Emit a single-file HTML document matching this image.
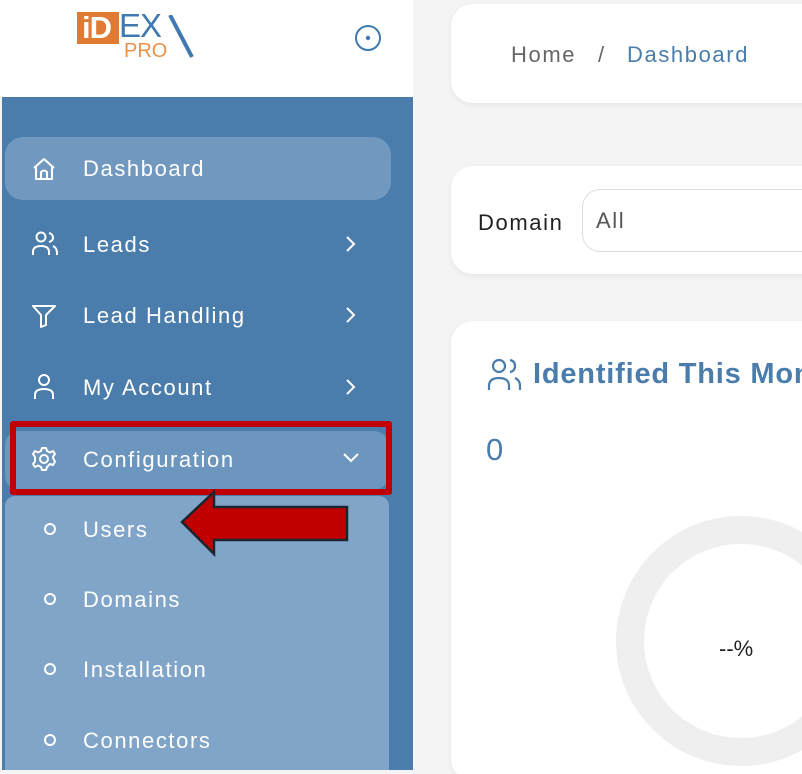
<!DOCTYPE html>
<html style="overflow:hidden"><head><meta charset="utf-8"><style>
*{margin:0;padding:0;box-sizing:border-box}
html,body{width:802px;height:774px;overflow:hidden}
body{background:#f4f4f4;font-family:"Liberation Sans",sans-serif;position:relative}
.abs{position:absolute}
.side{left:2px;top:97px;width:411px;height:673px;background:#4a7dab}
.top{left:0;top:0;width:413px;height:97px;background:#fff}
.item{position:absolute;left:0;width:411px;color:#fff;font-size:22px;letter-spacing:1.6px}
.item .t{position:absolute;left:83px;top:2px}
.item svg{position:absolute}
.card{background:#fff;border-radius:22px;box-shadow:0 2px 6px rgba(0,0,0,0.06)}
.w{letter-spacing:1.6px;font-size:22px}
</style></head><body>
<div class="abs top"></div>
<!-- logo -->
<div class="abs" style="left:77px;top:12px;width:42px;height:32px;background:#e07b35"></div>
<div class="abs" style="left:82px;top:10px;font-size:31px;font-weight:bold;color:#fff;letter-spacing:-1px">iD</div>
<div class="abs" style="left:119px;top:7px;font-size:33px;color:#3f79b0;letter-spacing:-1px">EX</div>
<div class="abs" style="left:124px;top:40px;font-size:20px;color:#e8924a">PRO</div>
<svg class="abs" style="left:150px;top:15px" width="45" height="45"><path d="M20 0 L42 42" stroke="#3f79b0" stroke-width="4"/></svg>
<svg class="abs" style="left:353px;top:24px" width="30" height="30"><circle cx="15" cy="14" r="12" fill="none" stroke="#3f79b0" stroke-width="2"/><circle cx="15" cy="14" r="2.2" fill="#3f79b0"/></svg>

<div class="abs side"></div>
<div class="abs" style="left:5px;top:137px;width:386px;height:63px;border-radius:18px;background:#7199c0"></div>
<div class="abs" style="left:5px;top:431px;width:383px;height:59px;border-radius:14px;background:#6d96be"></div>
<div class="abs" style="left:5px;top:496px;width:384px;height:274px;border-radius:10px 10px 0 0;background:#81a5c8"></div>

<div class="item" style="top:154px"><svg style="left:31px;top:2px" width="26" height="26" fill="none" stroke="#fff" stroke-width="2" stroke-linejoin="round"><path d="M3 12 L13 3 L23 12 M5 10 V23 H21 V10 M10 23 V16 Q13 13 16 16 V23"/></svg><span class="t">Dashboard</span></div>
<div class="item" style="top:230px"><svg style="left:31px;top:1px" width="28" height="26" fill="none" stroke="#fff" stroke-width="2"><circle cx="10" cy="6" r="4.5"/><path d="M2 24 V21 Q2 15 10 15 Q18 15 18 21 V24 M18 2 Q22 3 22 7 Q22 10 18 11 M22 15 Q26 17 26 22 V24"/></svg><span class="t">Leads</span><svg style="left:343px;top:5px" width="14" height="18" fill="none" stroke="#fff" stroke-width="2"><path d="M4 2 L11 9 L4 16"/></svg></div>
<div class="item" style="top:301px"><svg style="left:31px;top:1px" width="26" height="26" fill="none" stroke="#fff" stroke-width="2" stroke-linejoin="round"><path d="M2 4 H24 L15 13 V23 L10 25 V13 Z"/></svg><span class="t">Lead Handling</span><svg style="left:343px;top:5px" width="14" height="18" fill="none" stroke="#fff" stroke-width="2"><path d="M4 2 L11 9 L4 16"/></svg></div>
<div class="item" style="top:373px"><svg style="left:31px;top:0px" width="26" height="28" fill="none" stroke="#fff" stroke-width="2"><circle cx="13" cy="7" r="5"/><path d="M4 26 V22 Q4 16 13 16 Q22 16 22 22 V26"/></svg><span class="t">My Account</span><svg style="left:343px;top:5px" width="14" height="18" fill="none" stroke="#fff" stroke-width="2"><path d="M4 2 L11 9 L4 16"/></svg></div>
<div class="item" style="top:445px"><svg style="left:31px;top:1px" width="26" height="26" fill="none" stroke="#fff" stroke-width="2"><circle cx="13" cy="13" r="4"/><path d="M11 2 H15 L16 5 L19 6.5 L22 5 L24 8 L22 10.5 L22.5 13 L24 15.5 L22 19 L19 18 L16 21 L15 24 H11 L10 21 L7 19.5 L4 21 L2 18 L4 15.5 V11 L2 8 L4 5 L7 6.5 L10 5 Z" stroke-linejoin="round"/></svg><span class="t">Configuration</span><svg style="left:341px;top:6px" width="20" height="14" fill="none" stroke="#fff" stroke-width="2"><path d="M3 3 L10 10 L17 3"/></svg></div>
<div class="item" style="top:515px"><svg style="left:43px;top:7px" width="14" height="14"><circle cx="7" cy="7" r="5" fill="none" stroke="#fff" stroke-width="2"/></svg><span class="t">Users</span></div>
<div class="item" style="top:585px"><svg style="left:43px;top:7px" width="14" height="14"><circle cx="7" cy="7" r="5" fill="none" stroke="#fff" stroke-width="2"/></svg><span class="t">Domains</span></div>
<div class="item" style="top:655px"><svg style="left:43px;top:7px" width="14" height="14"><circle cx="7" cy="7" r="5" fill="none" stroke="#fff" stroke-width="2"/></svg><span class="t">Installation</span></div>
<div class="item" style="top:726px"><svg style="left:43px;top:7px" width="14" height="14"><circle cx="7" cy="7" r="5" fill="none" stroke="#fff" stroke-width="2"/></svg><span class="t">Connectors</span></div>

<div class="abs" style="left:10px;top:421px;width:382px;height:74px;border:6px solid #c00000;border-radius:3px"></div>
<svg class="abs" style="left:178px;top:488px" width="175" height="72"><path d="M4 34 L36 4 V19 H169 V52 H36 V66 Z" fill="#c00000" stroke="#1a2530" stroke-width="2.5" stroke-linejoin="miter"/></svg>

<!-- right -->
<div class="abs card" style="left:451px;top:4px;width:380px;height:99px"></div>
<div class="abs w" style="left:511px;top:42px;color:#666">Home</div>
<div class="abs w" style="left:598px;top:42px;color:#666">/</div>
<div class="abs w" style="left:627px;top:42px;color:#4a7dab">Dashboard</div>

<div class="abs card" style="left:451px;top:166px;width:380px;height:108px"></div>
<div class="abs w" style="left:478px;top:210px;color:#222">Domain</div>
<div class="abs" style="left:582px;top:189px;width:260px;height:63px;border:1px solid #ddd;border-radius:18px"></div>
<div class="abs w" style="left:596px;top:208px;color:#555">All</div>

<div class="abs card" style="left:451px;top:321px;width:380px;height:460px"></div>
<svg class="abs" style="left:487px;top:358px" width="36" height="34" fill="none" stroke="#4a7dab" stroke-width="2.2"><circle cx="12" cy="8" r="6"/><path d="M2 32 V28 Q2 20 12 20 Q22 20 22 28 V32 M23 2 Q28 3 28 8 Q28 13 23 14 M28 20 Q33 22 33 28 V32"/></svg>
<div class="abs" style="left:533px;top:358px;font-size:29px;font-weight:bold;letter-spacing:0.8px;color:#4a7dab;white-space:nowrap">Identified This Month</div>
<div class="abs" style="left:486px;top:432px;font-size:31px;color:#4a7dab">0</div>
<div class="abs" style="left:616px;top:516px;width:250px;height:250px;border-radius:50%;border:28px solid #efefef"></div>
<div class="abs" style="left:719px;top:636px;font-size:22px;color:#222">--%</div>
</body></html>
